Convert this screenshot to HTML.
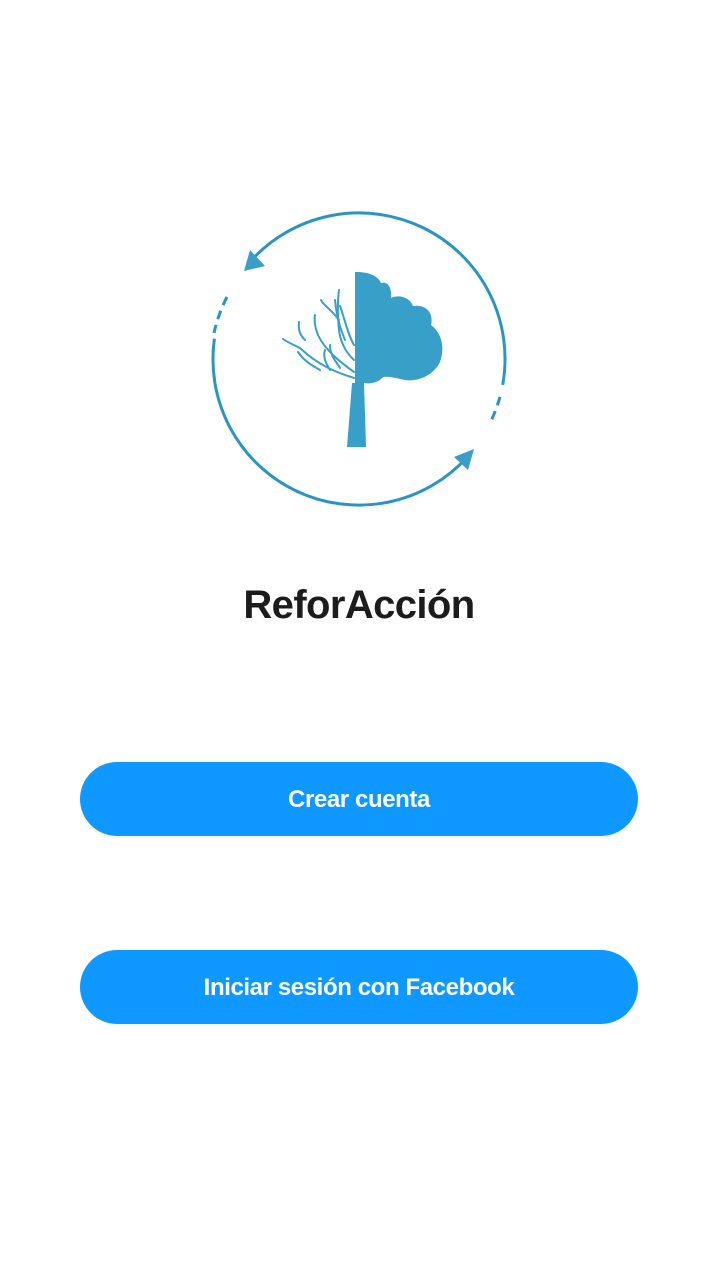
<!DOCTYPE html>
<html><head><meta charset="utf-8"><style>
body{margin:0;width:718px;height:1288px;background:#fff;font-family:"Liberation Sans",sans-serif;position:relative;overflow:hidden}
.t{position:absolute;top:583px;left:0;width:718px;text-align:center;font-size:40px;font-weight:bold;color:#1c1c1c;letter-spacing:-0.6px}
.b{position:absolute;left:80px;width:558px;height:74px;border-radius:37px;background:#0f98ff;color:#fff;font-weight:bold;font-size:24px;text-align:center;line-height:76px;letter-spacing:-0.4px}
</style></head><body>
<svg style="position:absolute;left:0;top:0" width="718" height="600" viewBox="0 0 718 600">
<g fill="none" stroke="#2a95c4" stroke-width="3">
<path d="M250.3 261.5 A146 146 0 0 1 502.7 384.9"/>
<path d="M500 396.8 A146 146 0 0 1 490.5 422" stroke-dasharray="9 6"/>
<path d="M227 297 A146 146 0 0 0 214 333" stroke-dasharray="9 6"/>
<path d="M214.4 338.7 A146 146 0 0 0 467.2 457.1"/>
</g>
<path d="M244 271 L250 250 L265 266 Z" fill="#3a9ec8"/>
<path d="M474 449 L454 457 L468 470 Z" fill="#3a9ec8"/>
<g fill="#389fc9">
<path d="M355 272 C370 272 378 276 381 283 C387 281 392 286 391 298 C400 294 410 298 413 306 C426 304 434 313 431 325 C442 333 445 348 440 362 C434 375 418 382 405 380 C396 378 388 376 383 377 C378 383 370 384 364 383 L366 447 L347 447 L352 383 L355 383 Z"/>
</g>
<g fill="none" stroke="#389fc9" stroke-width="2" stroke-linecap="round">
<path d="M354 378 C335 372 318 365 300 348"/>
<path d="M300 348 C292 344 287 342 283 339"/>
<path d="M354 372 C340 362 325 350 318 335 C315 327 314 320 315 315"/>
<path d="M354 360 C345 352 340 340 339 330 C338 320 337 305 339 290"/>
<path d="M339 320 C332 310 323 305 321 300"/>
<path d="M354 345 C348 335 345 320 340 306"/>
<path d="M345 340 C341 330 337 320 335 300"/>
<path d="M330 370 C325 362 323 356 325 350"/>
<path d="M340 368 C335 360 330 355 330 345"/>
<path d="M320 370 C313 366 305 362 298 352"/>
<path d="M305 340 C300 335 298 330 299 322"/>
</g>
</svg>
<div class="t">ReforAcción</div>
<div class="b" style="top:762px">Crear cuenta</div>
<div class="b" style="top:950px">Iniciar sesión con Facebook</div>
</body></html>
